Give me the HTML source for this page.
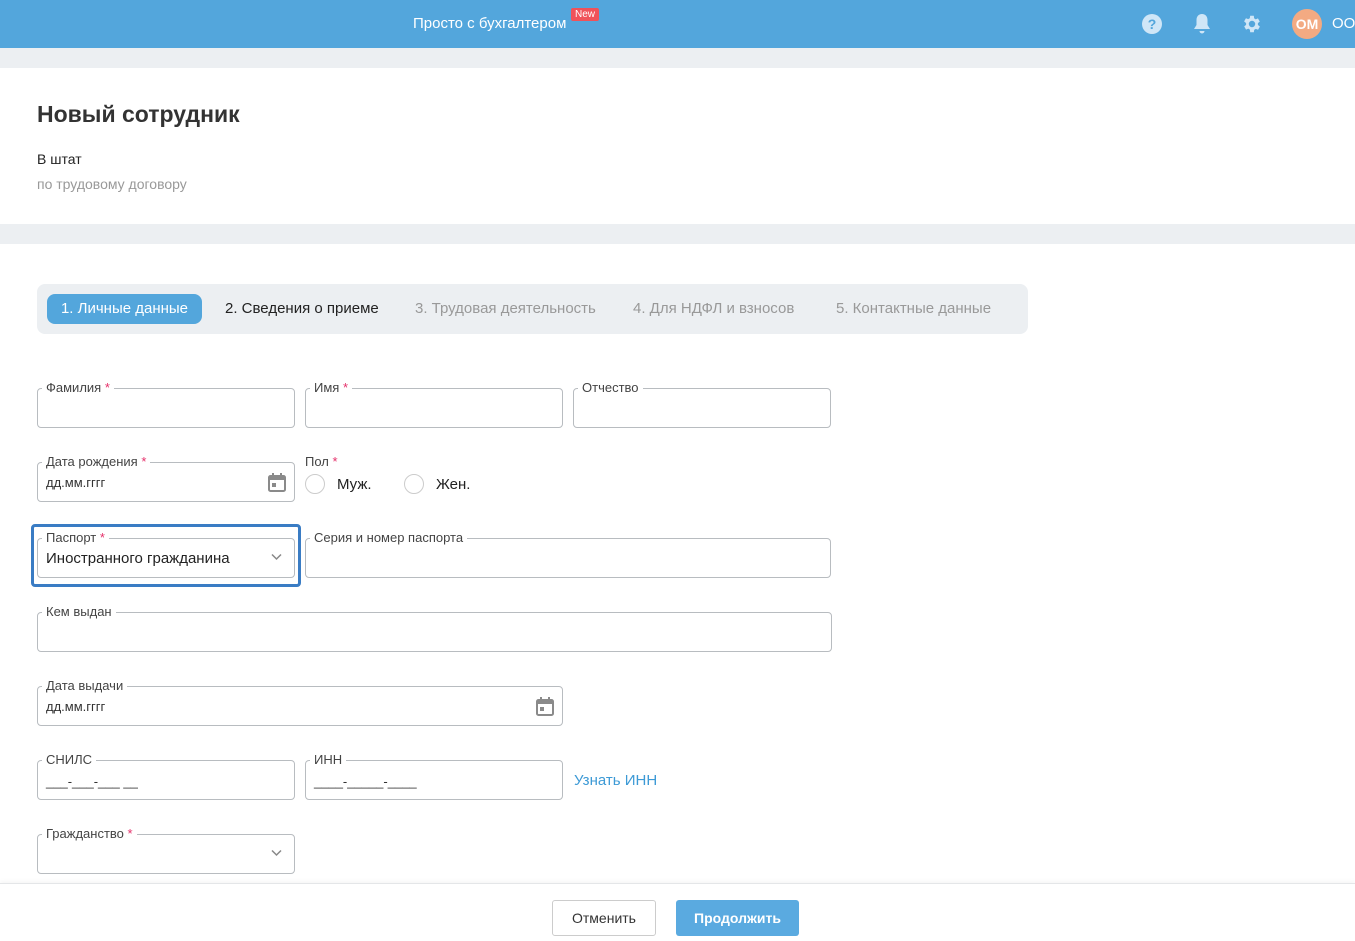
<!DOCTYPE html>
<html><head><meta charset="utf-8"><style>
*{box-sizing:border-box;margin:0;padding:0}
body{width:1355px;height:941px;overflow:hidden;font-family:"Liberation Sans",Arial,sans-serif;background:#fff;position:relative;color:#222}
.hdr{position:absolute;left:0;top:0;width:1355px;height:48px;background:#53a6dc}
.gray{position:absolute;left:0;width:1355px;background:#eceff2}
.f{position:absolute;border:1px solid #b8bcc0;border-radius:4px;height:40px}
.f .l{position:absolute;top:-9px;left:4px;background:#fff;padding:0 4px;font-size:13px;color:#444;line-height:16px}
.f .v{position:absolute;left:8px;top:12px;font-size:13px;color:#333}
.st{color:#e5306a}
.ab{position:absolute;font-size:15px}
.cal{position:absolute;right:8px;top:10px;width:18px;height:19px}
.chev{position:absolute;right:12px;top:14px}
</style></head><body>
<div class="hdr">
<div style="position:absolute;left:413px;top:15px;color:#fff;font-size:15px">Просто с бухгалтером</div>
<div style="position:absolute;left:571px;top:8px;background:#f0525a;color:#fff;font-size:10px;padding:1px 4px;border-radius:2px">New</div>
<svg style="position:absolute;left:1142px;top:14px" width="20" height="20" viewBox="0 0 20 20"><circle cx="10" cy="10" r="10" fill="#cfe6f7"/><text x="10" y="15" font-size="14" font-weight="bold" text-anchor="middle" fill="#53a6dc" font-family="Liberation Sans">?</text></svg>
<svg style="position:absolute;left:1193px;top:13px" width="18" height="21" viewBox="0 0 18 21"><path d="M9 1c-3.5 0-5.5 2.5-5.5 6v5L1 16h16l-2.5-4V7C14.5 3.5 12.5 1 9 1z" fill="#cfe6f7"/><path d="M6.5 18h5a2.5 2.5 0 0 1-5 0z" fill="#cfe6f7"/></svg>
<svg style="position:absolute;left:1241px;top:13px" width="22" height="22" viewBox="0 0 24 24"><path fill="#cfe6f7" d="M19.4 13a7.5 7.5 0 0 0 0-2l2.1-1.6-2-3.5-2.5 1a7 7 0 0 0-1.7-1L15 3h-4l-.4 2.7a7 7 0 0 0-1.7 1l-2.5-1-2 3.5L6.6 11a7.5 7.5 0 0 0 0 2l-2.1 1.6 2 3.5 2.5-1a7 7 0 0 0 1.7 1L11 21h4l.4-2.7a7 7 0 0 0 1.7-1l2.5 1 2-3.5zM13 15.5a3.5 3.5 0 1 1 0-7 3.5 3.5 0 0 1 0 7z" transform="translate(-1 0)"/></svg>
<div style="position:absolute;left:1292px;top:9px;width:30px;height:30px;border-radius:50%;background:#f3aa82;color:#fff;font-weight:bold;font-size:14px;line-height:30px;text-align:center">OM</div>
<div style="position:absolute;left:1332px;top:15px;color:#fff;font-size:15px">ООО</div>
</div>
<div class="gray" style="top:48px;height:20px"></div>
<div class="gray" style="top:224px;height:20px"></div>
<div style="position:absolute;left:37px;top:101px;font-size:23px;font-weight:bold;color:#333">Новый сотрудник</div>
<div style="position:absolute;left:37px;top:151px;font-size:14px">В штат</div>
<div style="position:absolute;left:37px;top:176px;font-size:14px;color:#999">по трудовому договору</div>

<div style="position:absolute;left:37px;top:284px;width:991px;height:50px;background:#eceff2;border-radius:8px"></div>
<div style="position:absolute;left:47px;top:294px;width:155px;height:30px;background:#53a6dc;border-radius:8px;color:#fff;font-size:15px;line-height:30px;text-align:center">1. Личные данные</div>
<div class="ab" style="left:225px;top:300px;color:#222">2. Сведения о приеме</div>
<div class="ab" style="left:415px;top:300px;color:#999">3. Трудовая деятельность</div>
<div class="ab" style="left:633px;top:300px;color:#999">4. Для НДФЛ и взносов</div>
<div class="ab" style="left:836px;top:300px;color:#999">5. Контактные данные</div>

<div class="f" style="left:37px;top:388px;width:258px"><span class="l">Фамилия <span class="st">*</span></span></div>
<div class="f" style="left:305px;top:388px;width:258px"><span class="l">Имя <span class="st">*</span></span></div>
<div class="f" style="left:573px;top:388px;width:258px"><span class="l">Отчество</span></div>

<div class="f" style="left:37px;top:462px;width:258px"><span class="l">Дата рождения <span class="st">*</span></span><span class="v" style="top:12px">дд.мм.гггг</span>
<svg class="cal" viewBox="0 0 18 19"><rect x="1" y="3" width="16" height="15" rx="1.5" fill="none" stroke="#8a8a8a" stroke-width="2"/><rect x="1" y="3" width="16" height="4" fill="#8a8a8a"/><rect x="4" y="0" width="2" height="4" fill="#8a8a8a"/><rect x="12" y="0" width="2" height="4" fill="#8a8a8a"/><rect x="4" y="10" width="4" height="4" fill="#8a8a8a"/></svg></div>
<div style="position:absolute;left:305px;top:454px;font-size:13px;color:#444">Пол <span class="st">*</span></div>
<div style="position:absolute;left:305px;top:474px;width:20px;height:20px;border:1px solid #ccc;border-radius:50%"></div>
<div class="ab" style="left:337px;top:476px">Муж.</div>
<div style="position:absolute;left:404px;top:474px;width:20px;height:20px;border:1px solid #ccc;border-radius:50%"></div>
<div class="ab" style="left:436px;top:476px">Жен.</div>

<div style="position:absolute;left:31px;top:524px;width:270px;height:63px;border:3px solid #3a7cc4;border-radius:4px"></div>
<div class="f" style="left:37px;top:538px;width:258px"><span class="l">Паспорт <span class="st">*</span></span><span class="v" style="top:11px;font-size:15px;color:#222">Иностранного гражданина</span>
<svg class="chev" width="11" height="8" viewBox="0 0 11 8"><path d="M1 1.5l4.5 4.5 4.5-4.5" fill="none" stroke="#888" stroke-width="1.5"/></svg></div>
<div class="f" style="left:305px;top:538px;width:526px"><span class="l">Серия и номер паспорта</span></div>

<div class="f" style="left:37px;top:612px;width:795px"><span class="l">Кем выдан</span></div>

<div class="f" style="left:37px;top:686px;width:526px"><span class="l">Дата выдачи</span><span class="v">дд.мм.гггг</span>
<svg class="cal" viewBox="0 0 18 19"><rect x="1" y="3" width="16" height="15" rx="1.5" fill="none" stroke="#8a8a8a" stroke-width="2"/><rect x="1" y="3" width="16" height="4" fill="#8a8a8a"/><rect x="4" y="0" width="2" height="4" fill="#8a8a8a"/><rect x="12" y="0" width="2" height="4" fill="#8a8a8a"/><rect x="4" y="10" width="4" height="4" fill="#8a8a8a"/></svg></div>

<div class="f" style="left:37px;top:760px;width:258px"><span class="l">СНИЛС</span><span class="v" style="top:13px">___-___-___ __</span></div>
<div class="f" style="left:305px;top:760px;width:258px"><span class="l">ИНН</span><span class="v" style="top:13px">____-_____-____</span></div>
<div class="ab" style="left:574px;top:772px;color:#3d9ad6">Узнать ИНН</div>

<div class="f" style="left:37px;top:834px;width:258px"><span class="l">Гражданство <span class="st">*</span></span>
<svg class="chev" width="11" height="8" viewBox="0 0 11 8"><path d="M1 1.5l4.5 4.5 4.5-4.5" fill="none" stroke="#888" stroke-width="1.5"/></svg></div>

<div style="position:absolute;left:0;top:883px;width:1355px;height:58px;background:#fff;border-top:1px solid #e4e6e8;box-shadow:0 -2px 4px rgba(0,0,0,0.04)"></div>
<div style="position:absolute;left:552px;top:900px;width:104px;height:36px;border:1px solid #ccc;border-radius:3px;font-size:14px;line-height:34px;text-align:center;color:#333">Отменить</div>
<div style="position:absolute;left:676px;top:900px;width:123px;height:36px;background:#5aaae0;border-radius:3px;font-size:14px;line-height:36px;text-align:center;color:#fff;font-weight:bold">Продолжить</div>
</body></html>
